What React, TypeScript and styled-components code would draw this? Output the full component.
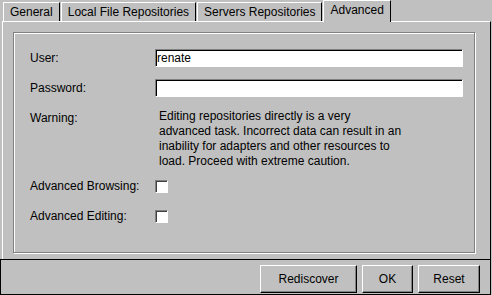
import React from "react";
import styled, { createGlobalStyle } from "styled-components";

const Global = createGlobalStyle`
  html, body { margin: 0; padding: 0; background: #c0c0c0; }
  body {
    font-family: "Liberation Sans", Arial, sans-serif;
    font-size: 12px;
    color: #000;
  }
  * { box-sizing: border-box; }
`;

const Window = styled.div`
  width: 492px;
  height: 295px;
  background: #c0c0c0;
  display: flex;
  flex-direction: column;
  overflow: hidden;
`;

const TabStrip = styled.div`
  display: flex;
  align-items: flex-end;
  height: 21px;
  padding-left: 3px;
  gap: 1px;
  position: relative;
  z-index: 1;
`;

const Tab = styled.div<{ $active?: boolean }>`
  height: ${(p) => (p.$active ? 22 : 19)}px;
  margin-bottom: ${(p) => (p.$active ? -1 : 0)}px;
  padding: 0 6px ${(p) => (p.$active ? 3 : 0)}px;
  border-top: 1px solid #fff;
  border-left: 1px solid #fff;
  border-right: 1px solid #000;
  background: #c0c0c0;
  display: flex;
  align-items: center;
  white-space: nowrap;
  line-height: 1;
`;

const TabPanel = styled.div`
  margin-left: 2px;
  width: 489px;
  height: 238px;
  border-top: 1px solid #fff;
  border-left: 1px solid #fff;
  border-right: 1px solid #000;
  padding: 10px 14px 5px 10px;
`;

const GroupBox = styled.div`
  width: 462px;
  height: 221px;
  border: 1px solid #808080;
  box-shadow: inset 1px 1px 0 #fff, 1px 1px 0 #fff;
  padding: 16px 0 0 16px;
`;

const Form = styled.div`
  display: grid;
  grid-template-columns: 125px 308px;
  grid-template-rows: 18px 18px 56px 18px 18px;
  row-gap: 12px;
`;

const Label = styled.div`
  line-height: 18px;
  white-space: nowrap;
`;

const TextField = styled.input`
  width: 308px;
  height: 18px;
  margin: 0;
  padding: 0 0 0 1px;
  border: 1px solid;
  border-color: #808080 #fff #fff #808080;
  box-shadow: inset 1px 1px 0 #000;
  background: #fff;
  font: 12px "Liberation Sans", Arial, sans-serif;
  color: #000;
  outline: none;
`;

const Warning = styled.div`
  padding-left: 4px;
  line-height: 15px;
  white-space: nowrap;
`;

const CheckCell = styled.div`
  display: flex;
  align-items: center;
  height: 18px;
`;

const CheckBox = styled.span`
  display: inline-block;
  width: 13px;
  height: 13px;
  border: 1px solid;
  border-color: #808080 #fff #fff #808080;
  box-shadow: inset 1px 1px 0 #404040;
  background: #fff;
`;

const ButtonBar = styled.div`
  width: 491px;
  height: 36px;
  border: 1px solid #000;
  display: flex;
  justify-content: flex-end;
  align-items: flex-start;
  gap: 5px;
  padding: 5px 10px 0 0;
`;

const Button = styled.button<{ $w: number }>`
  width: ${(p) => p.$w}px;
  height: 28px;
  margin: 0;
  padding: 0;
  background: #c0c0c0;
  border: 1px solid;
  border-color: #fff #000 #000 #fff;
  box-shadow: inset -1px -1px 0 #808080;
  font: 12px "Liberation Sans", Arial, sans-serif;
  color: #000;
`;

export default function App() {
  return (
    <>
      <Global />
      <Window>
        <TabStrip>
          <Tab>General</Tab>
          <Tab>Local File Repositories</Tab>
          <Tab>Servers Repositories</Tab>
          <Tab $active>Advanced</Tab>
        </TabStrip>
        <TabPanel>
          <GroupBox>
            <Form>
              <Label>User:</Label>
              <TextField defaultValue="renate" readOnly />
              <Label>Password:</Label>
              <TextField type="password" defaultValue="" readOnly />
              <Label>Warning:</Label>
              <Warning>
                Editing repositories directly is a very
                <br />
                advanced task. Incorrect data can result in an
                <br />
                inability for adapters and other resources to
                <br />
                load. Proceed with extreme caution.
              </Warning>
              <Label>Advanced Browsing:</Label>
              <CheckCell>
                <CheckBox />
              </CheckCell>
              <Label>Advanced Editing:</Label>
              <CheckCell>
                <CheckBox />
              </CheckCell>
            </Form>
          </GroupBox>
        </TabPanel>
        <ButtonBar>
          <Button $w={97}>Rediscover</Button>
          <Button $w={51}>OK</Button>
          <Button $w={62}>Reset</Button>
        </ButtonBar>
      </Window>
    </>
  );
}
